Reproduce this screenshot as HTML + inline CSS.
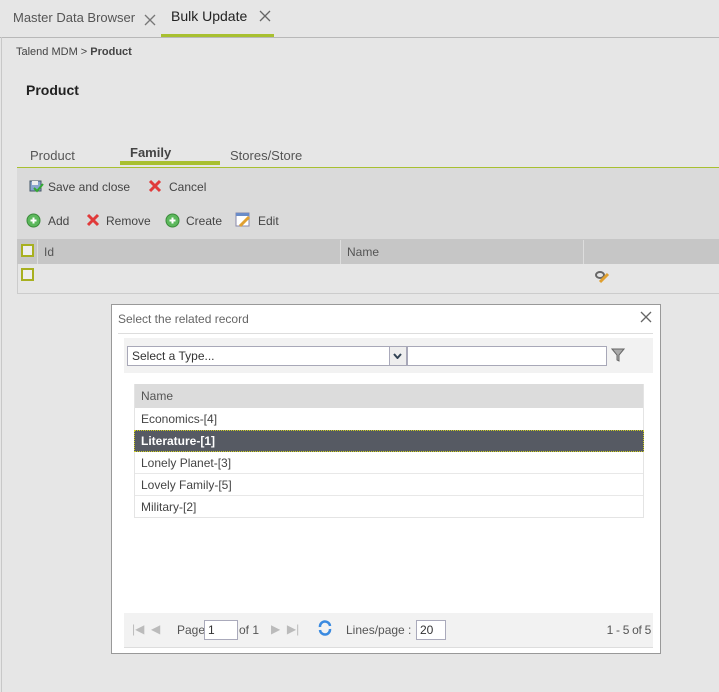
<!DOCTYPE html>
<html><head><style>
*{box-sizing:border-box;margin:0;padding:0}
body{width:719px;height:692px;background:#e6e6e6;font-family:"Liberation Sans",sans-serif;color:#333;position:relative;overflow:hidden;font-size:12px}
.a{position:absolute;white-space:nowrap}
</style></head><body>
<div class="a" style="left:0;top:37px;width:719px;height:1px;background:#b8b8b8"></div>
<div class="a" style="left:1px;top:37px;width:1px;height:655px;background:#c8c8c8"></div>
<div class="a" style="left:13px;top:10px;font-size:13px;color:#555">Master Data Browser</div>
<svg class="a" style="left:144px;top:14px" width="12" height="12"><path d="M1 1L11 11M11 1L1 11" stroke="#777" stroke-width="1.3"/></svg>
<div class="a" style="left:171px;top:8px;font-size:14px;color:#222">Bulk Update</div>
<svg class="a" style="left:259px;top:10px" width="12" height="12"><path d="M1 1L11 11M11 1L1 11" stroke="#666" stroke-width="1.3"/></svg>
<div class="a" style="left:161px;top:34px;width:113px;height:3px;background:#a8c030"></div>
<div class="a" style="left:16px;top:46px;font-size:11px;color:#444">Talend MDM &gt; <b>Product</b></div>
<div class="a" style="left:26px;top:82px;font-size:14px;font-weight:bold;color:#222">Product</div>
<div class="a" style="left:30px;top:148px;font-size:13px;color:#555">Product</div>
<div class="a" style="left:130px;top:145px;font-size:13px;font-weight:bold;color:#444">Family</div>
<div class="a" style="left:230px;top:148px;font-size:13px;color:#555">Stores/Store</div>
<div class="a" style="left:120px;top:161px;width:100px;height:4px;background:#a8c030"></div>
<div class="a" style="left:17px;top:167px;width:702px;height:1px;background:#a8c030"></div>
<div class="a" style="left:17px;top:168px;width:702px;height:71px;background:#dadada"></div>
<svg class="a" style="left:29px;top:179px" width="15" height="15"><rect x="1" y="2" width="11" height="10" fill="#8aa6cf" stroke="#456"/><rect x="3" y="2" width="6" height="4" fill="#eee"/><path d="M5 9L8 12L14 5" stroke="#3a3" stroke-width="2" fill="none"/></svg>
<div class="a" style="left:48px;top:180px;color:#444">Save and close</div>
<svg class="a" style="left:148px;top:179px" width="14" height="14"><path d="M2 2L12 12M12 2L2 12" stroke="#e03a3a" stroke-width="3"/></svg>
<div class="a" style="left:169px;top:180px;color:#444">Cancel</div>
<svg class="a" style="left:26px;top:213px" width="15" height="15"><circle cx="7.5" cy="7.5" r="6.5" fill="#5cb85c" stroke="#3a8a3a"/><path d="M7.5 4.5V10.5M4.5 7.5H10.5" stroke="#fff" stroke-width="2"/></svg>
<div class="a" style="left:48px;top:214px;color:#444">Add</div>
<svg class="a" style="left:86px;top:213px" width="14" height="14"><path d="M2 2L12 12M12 2L2 12" stroke="#e03a3a" stroke-width="3"/></svg>
<div class="a" style="left:106px;top:214px;color:#444">Remove</div>
<svg class="a" style="left:165px;top:213px" width="15" height="15"><circle cx="7.5" cy="7.5" r="6.5" fill="#5cb85c" stroke="#3a8a3a"/><path d="M7.5 4.5V10.5M4.5 7.5H10.5" stroke="#fff" stroke-width="2"/></svg>
<div class="a" style="left:186px;top:214px;color:#444">Create</div>
<svg class="a" style="left:235px;top:212px" width="16" height="16"><rect x="1" y="1" width="13" height="13" fill="#fff" stroke="#88a"/><rect x="1" y="1" width="13" height="3" fill="#6a8cc8"/><path d="M5 14L14 5" stroke="#e0a030" stroke-width="3"/></svg>
<div class="a" style="left:258px;top:214px;color:#444">Edit</div>
<div class="a" style="left:17px;top:239px;width:702px;height:25px;background:#c6c6c6"></div>
<div class="a" style="left:37px;top:240px;width:1px;height:24px;background:#ddd"></div>
<div class="a" style="left:340px;top:240px;width:1px;height:24px;background:#ddd"></div>
<div class="a" style="left:583px;top:240px;width:1px;height:24px;background:#ddd"></div>
<div class="a" style="left:21px;top:244px;width:13px;height:13px;border:2px solid #a8b020;background:#eee"></div>
<div class="a" style="left:44px;top:245px;color:#555">Id</div>
<div class="a" style="left:347px;top:245px;color:#555">Name</div>
<div class="a" style="left:17px;top:264px;width:1px;height:30px;background:#ccc"></div>
<div class="a" style="left:17px;top:293px;width:702px;height:1px;background:#ccc"></div>
<div class="a" style="left:21px;top:268px;width:13px;height:13px;border:2px solid #a8b020;background:#eee"></div>
<svg class="a" style="left:595px;top:270px" width="16" height="14"><ellipse cx="5" cy="5" rx="4" ry="3" fill="none" stroke="#666" stroke-width="2"/><path d="M5 12L13 4" stroke="#e0a030" stroke-width="3"/></svg>

<div class="a" style="left:111px;top:304px;width:550px;height:350px;background:#fff;border:1px solid #999"></div>
<div class="a" style="left:118px;top:312px;font-size:12px;color:#666">Select the related record</div>
<svg class="a" style="left:640px;top:311px" width="12" height="12"><path d="M1 1L11 11M11 1L1 11" stroke="#666" stroke-width="1.3"/></svg>
<div class="a" style="left:118px;top:333px;width:535px;height:1px;background:#ddd"></div>
<div class="a" style="left:124px;top:338px;width:529px;height:35px;background:#f2f2f2"></div>
<div class="a" style="left:127px;top:346px;width:280px;height:20px;background:#fff;border:1px solid #a8a8b8;padding:2px 4px;color:#333">Select a Type...</div>
<div class="a" style="left:389px;top:347px;width:17px;height:18px;background:#eee;border-left:1px solid #aab"></div>
<svg class="a" style="left:393px;top:353px" width="9" height="6"><path d="M1 1L4.5 5L8 1" stroke="#345" stroke-width="2" fill="none"/></svg>
<div class="a" style="left:407px;top:346px;width:200px;height:20px;background:#fff;border:1px solid #a8a8b8"></div>
<svg class="a" style="left:611px;top:348px" width="14" height="14"><path d="M1 1H13L8 7V13L6 12V7Z" fill="#aaa" stroke="#666"/></svg>
<div class="a" style="left:134px;top:384px;width:510px;height:134px;border:1px solid #e4e4e4;background:#fff"></div>
<div class="a" style="left:135px;top:384px;width:508px;height:24px;background:#dcdcdc"></div>
<div class="a" style="left:141px;top:389px;color:#555">Name</div>
<div class="a" style="left:141px;top:412px;color:#444">Economics-[4]</div>
<div class="a" style="left:134px;top:430px;width:510px;height:22px;background:#565a63;border:1px dotted #d0d020"></div>
<div class="a" style="left:141px;top:434px;color:#fff;font-weight:bold">Literature-[1]</div>
<div class="a" style="left:135px;top:473px;width:508px;height:1px;background:#e8e8e8"></div>
<div class="a" style="left:135px;top:495px;width:508px;height:1px;background:#e8e8e8"></div>
<div class="a" style="left:141px;top:456px;color:#444">Lonely Planet-[3]</div>
<div class="a" style="left:141px;top:478px;color:#444">Lovely Family-[5]</div>
<div class="a" style="left:141px;top:500px;color:#444">Military-[2]</div>
<div class="a" style="left:124px;top:613px;width:529px;height:35px;background:#f2f2f2;border-bottom:1px solid #ddd"></div>
<div class="a" style="left:132px;top:622px;color:#bbb;font-size:12px">|◀ &nbsp;◀</div>
<div class="a" style="left:177px;top:623px;color:#555">Page</div>
<div class="a" style="left:204px;top:620px;width:34px;height:20px;background:#fff;border:1px solid #aab;padding:2px 3px;color:#333">1</div>
<div class="a" style="left:239px;top:623px;color:#555">of 1</div>
<div class="a" style="left:271px;top:622px;color:#bbb">▶ &nbsp;▶|</div>
<svg class="a" style="left:317px;top:620px" width="16" height="16"><path d="M3 7A5 5 0 0 1 13 6M13 9A5 5 0 0 1 3 10" stroke="#3a8ae0" stroke-width="2.5" fill="none"/></svg>
<div class="a" style="left:346px;top:623px;color:#555">Lines/page :</div>
<div class="a" style="left:416px;top:620px;width:30px;height:20px;background:#fff;border:1px solid #aab;padding:2px 3px;color:#333">20</div>
<div class="a" style="right:68px;top:623px;color:#555;letter-spacing:-0.3px">1 - 5 of 5</div>
</body></html>
